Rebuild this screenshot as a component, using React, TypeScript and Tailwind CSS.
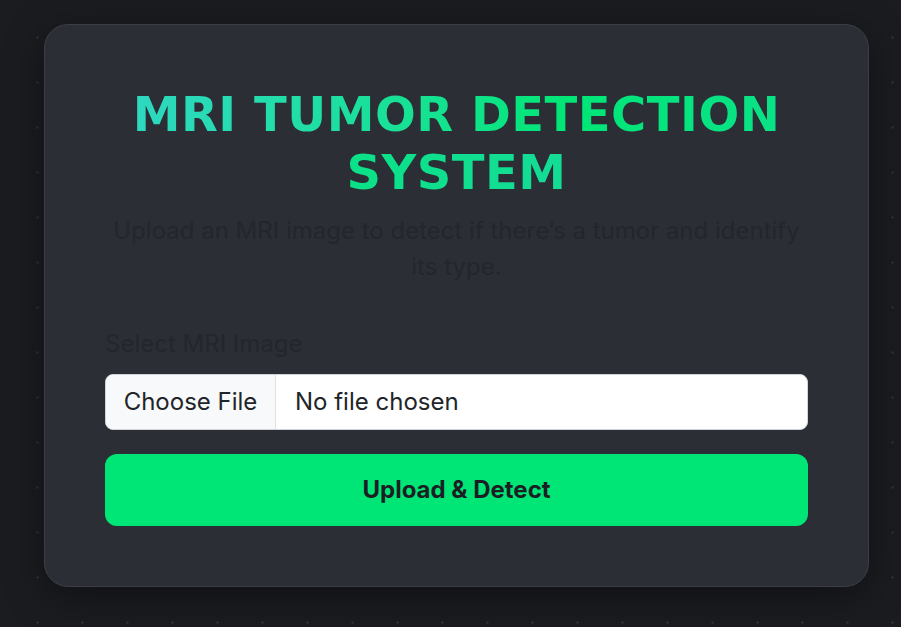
const App = (): JSX.Element => {
  return (
    <div className="min-h-screen w-full bg-[#1b1c20] bg-[radial-gradient(circle,#2c2e33_1px,transparent_1.5px)] bg-[length:45px_45px] bg-[position:15px_15px] pt-6 pl-11 font-['Inter',sans-serif]">
      <div className="w-[825px] rounded-[24px] border border-[#3b3e45] bg-[#2b2e35] px-[60px] pt-[60px] pb-[60px] shadow-[0_10px_40px_rgba(0,0,0,0.4)]">
        <h1 className="text-center font-['DejaVu_Sans',Verdana,sans-serif] text-[48px] font-bold leading-[58px] tracking-[0.5px]">
          <span className="bg-gradient-to-r from-[#2ed8c0] via-[#00e676] to-[#14dc96] bg-clip-text text-transparent">
            MRI TUMOR DETECTION SYSTEM
          </span>
        </h1>
        <p className="mx-auto mt-3 max-w-[700px] text-center text-[24px] leading-[36px] text-[#23262c]">
          Upload an MRI image to detect if there’s a tumor and identify its type.
        </p>

        <form className="mt-[41px]" onSubmit={(e) => e.preventDefault()}>
          <label className="block text-[24px] leading-[36px] text-[#23262c]">
            Select MRI Image
          </label>
          <div className="mt-3 flex h-[56px] w-full overflow-hidden rounded-lg border border-[#d0d4da] bg-white">
            <span className="flex w-[170px] items-center justify-center border-r border-[#dee2e6] bg-[#f8f9fa] text-[24px] text-[#212529]">
              Choose File
            </span>
            <span className="flex items-center pl-[19px] text-[24px] text-[#212529]">
              No file chosen
            </span>
          </div>
          <button
            type="submit"
            className="mt-6 h-[72px] w-full rounded-xl bg-[#00e676] text-[24px] font-bold text-[#1b1f24]"
          >
            Upload &amp; Detect
          </button>
        </form>
      </div>
    </div>
  );
};

export default App;
